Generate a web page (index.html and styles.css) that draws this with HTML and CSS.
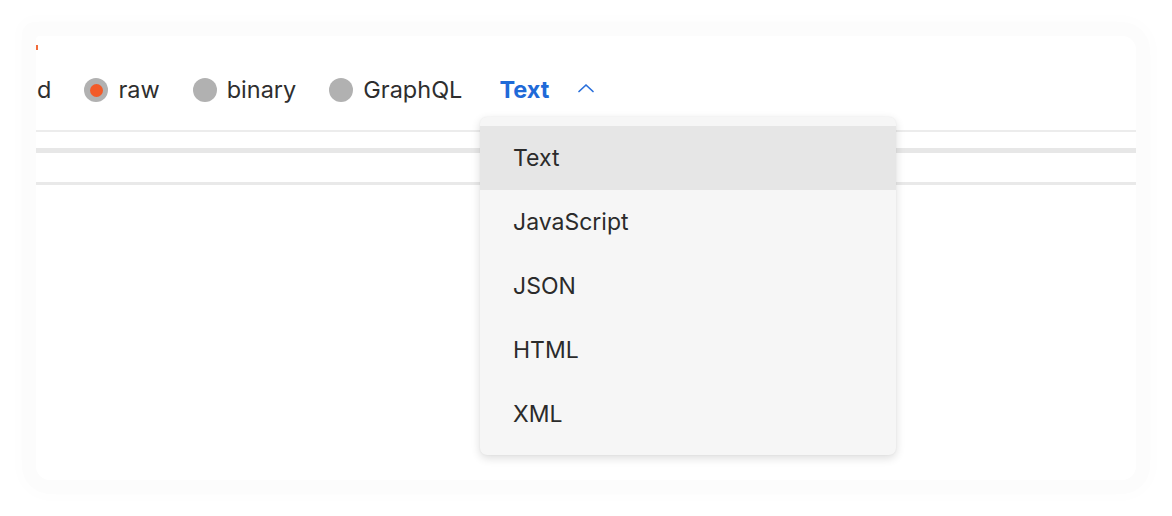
FILE: index.html
```html
<!DOCTYPE html>
<html>
<head>
<meta charset="utf-8">
<link rel="stylesheet" href="styles.css">
</head>
<body>
<div class="card">
  <span class="tab-mark"></span>
  <div class="body-row">
    <span class="opt-label cut">d</span>
    <label class="opt"><span class="radio on"></span><span class="opt-label">raw</span></label>
    <label class="opt"><span class="radio"></span><span class="opt-label">binary</span></label>
    <label class="opt"><span class="radio"></span><span class="opt-label">GraphQL</span></label>
    <button class="lang">
      <span class="lang-text">Text</span>
      <svg class="chev" width="18" height="10" viewBox="0 0 18 10"><path d="M2 8.5 L9 2 L16 8.5" fill="none" stroke="#2a6fdb" stroke-width="1.7" stroke-linecap="round" stroke-linejoin="round"/></svg>
    </button>
  </div>
  <div class="rule r1"></div>
  <div class="rule r2"></div>
  <div class="rule r3"></div>

  <ul class="menu">
    <li class="item active">Text</li>
    <li class="item">JavaScript</li>
    <li class="item">JSON</li>
    <li class="item">HTML</li>
    <li class="item">XML</li>
  </ul>
</div>
</body>
</html>
```

FILE: styles.css
```css
html, body {
  margin: 0;
  padding: 0;
  background: #ffffff;
}
body {
  font-family: Inter, "Noto Sans", sans-serif;
  padding: 36px;
  width: 1100px;
}
.card {
  position: relative;
  width: 1100px;
  height: 444px;
  background: #ffffff;
  border-radius: 4px 14px 14px 14px;
  box-shadow: 0 0 0 14px #fcfcfc, 0 0 16px 18px rgba(0,0,0,0.012);
}
.tab-mark {
  position: absolute;
  left: 0;
  top: 9px;
  width: 2px;
  height: 5px;
  background: #f26b3a;
}
.body-row {
  display: flex;
  align-items: center;
  height: 48px;
  padding-top: 30px;
  margin-bottom: 16px;
  gap: 33px;
  font-size: 23.5px;
  color: #2e2e2e;
}
.cut {
  margin-left: 1px;
}
.opt {
  display: flex;
  align-items: center;
  gap: 10px;
}
.opt-label {
  line-height: 1;
}
.radio {
  width: 24px;
  height: 24px;
  border-radius: 50%;
  background: #b1b1b1;
  display: flex;
  align-items: center;
  justify-content: center;
}
.radio.on::after {
  content: "";
  width: 13px;
  height: 13px;
  border-radius: 50%;
  background: #f25a28;
}
.lang {
  display: flex;
  align-items: center;
  gap: 28px;
  border: 0;
  background: none;
  padding: 0;
  margin-left: 4px;
  font: inherit;
}
.lang-text {
  color: #1f6ad8;
  font-weight: 700;
  font-size: 23.5px;
  line-height: 1;
}
.chev {
  margin-top: -4px;
}
.r1 {
  height: 2px;
  background: #ececec;
}
.r2 {
  height: 5px;
  margin-top: 16px;
  background: #e7e7e7;
}
.r3 {
  height: 3px;
  margin-top: 29px;
  background: #e9e9e9;
}
.menu {
  position: absolute;
  left: 444px;
  top: 81px;
  width: 416px;
  margin: 0;
  padding: 9px 0;
  list-style: none;
  background: #f6f6f6;
  border-radius: 7px;
  box-shadow: 0 3px 10px rgba(0,0,0,0.14), 0 0 2px rgba(0,0,0,0.06);
}
.item {
  height: 64px;
  display: flex;
  align-items: center;
  padding-left: 33px;
  font-size: 23px;
  color: #2b2b2b;
}
.item.active {
  background: #e6e6e6;
}
```
